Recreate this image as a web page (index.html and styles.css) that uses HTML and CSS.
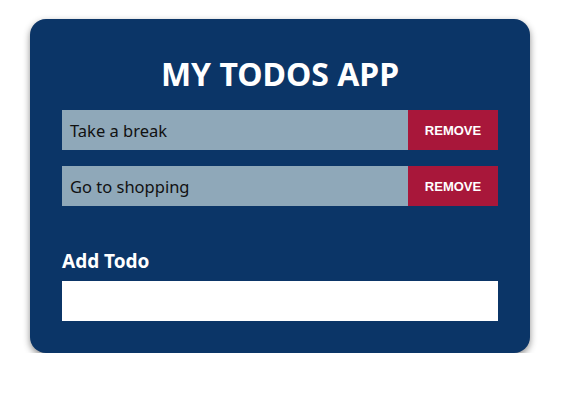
FILE: index.html
```html
<!DOCTYPE html>
<html lang="en">
<head>
<meta charset="utf-8">
<title>My Todos App</title>
<link rel="stylesheet" href="styles.css">
</head>
<body>
<main class="card">
  <h1 class="title">MY TODOS APP</h1>
  <ul class="todos">
    <li class="todo">
      <span class="todo-text">Take a break</span>
      <button class="remove" type="button">REMOVE</button>
    </li>
    <li class="todo">
      <span class="todo-text">Go to shopping</span>
      <button class="remove" type="button">REMOVE</button>
    </li>
  </ul>
  <form class="add">
    <label class="add-label" for="new-todo">Add Todo</label>
    <input class="add-input" id="new-todo" type="text">
  </form>
</main>
</body>
</html>
```

FILE: styles.css
```css
* { box-sizing: border-box; }
html, body { margin: 0; padding: 0; background: #ffffff; }
body {
  font-family: "Noto Sans", "Open Sans", sans-serif;
  padding: 19px 33px 0 30px;
}
.card {
  width: 500px;
  height: 334px;
  background: #0b3567;
  border-radius: 16px;
  padding: 32px;
  box-shadow: 0 3px 7px rgba(0, 0, 0, 0.45);
}
.title {
  margin: 0;
  color: #ffffff;
  font-size: 32px;
  font-weight: 700;
  line-height: 46px;
  text-align: center;
}
.todos {
  list-style: none;
  margin: 13px 0 0;
  padding: 0;
  display: flex;
  flex-direction: column;
  gap: 16px;
}
.todo {
  display: flex;
  height: 40px;
  background: #8fa8b9;
}
.todo-text {
  flex: 1;
  display: flex;
  align-items: center;
  padding-left: 8px;
  font-size: 16.5px;
  color: #111111;
}
.remove {
  width: 90px;
  border: 0;
  background: #a8173a;
  color: #ffffff;
  font-family: "Liberation Sans", Arial, sans-serif;
  font-weight: 700;
  font-size: 13px;
  padding: 0;
}
.add {
  margin-top: 42px;
  display: flex;
  flex-direction: column;
}
.add-label {
  color: #ffffff;
  font-weight: 700;
  font-size: 19px;
  line-height: 26px;
  margin-bottom: 7px;
}
.add-input {
  height: 40px;
  border: 0;
  background: #ffffff;
  padding: 0 8px;
  font-family: inherit;
  font-size: 16px;
}
```
